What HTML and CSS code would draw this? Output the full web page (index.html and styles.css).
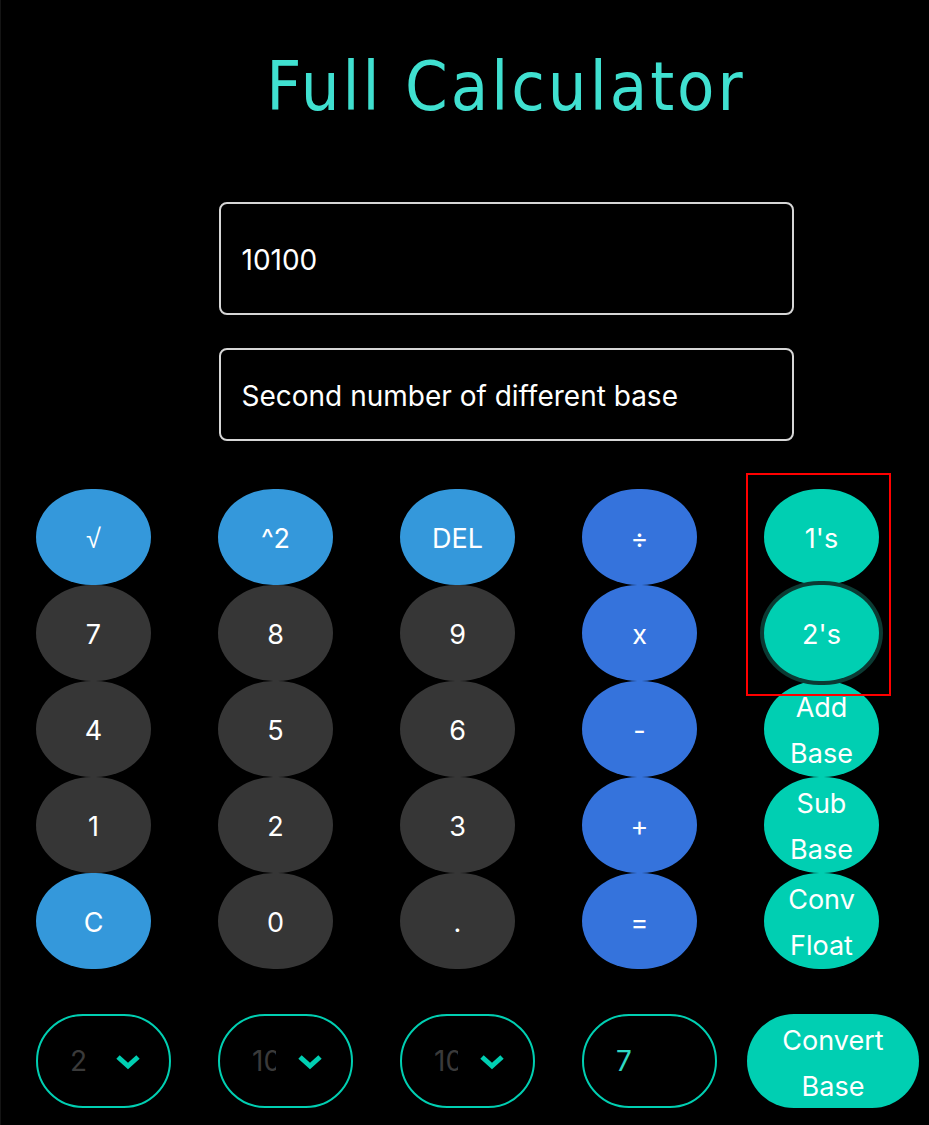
FILE: index.html
```html
<!DOCTYPE html>
<html lang="en">
<head>
<meta charset="utf-8">
<title>Full Calculator</title>
<link rel="stylesheet" href="styles.css">
</head>
<body>
<div class="page">
  <header class="top">
    <h1 class="title">Full Calculator</h1>
    <div class="field field-main">10100</div>
    <div class="field field-second">Second number of different base</div>
  </header>

  <div class="keypad">
    <button class="key key-fn key-sqrt">√</button>
    <button class="key key-fn">^2</button>
    <button class="key key-fn">DEL</button>
    <button class="key key-op">÷</button>
    <button class="key key-base">1's</button>

    <button class="key key-num">7</button>
    <button class="key key-num">8</button>
    <button class="key key-num">9</button>
    <button class="key key-op">x</button>
    <button class="key key-base key-focus">2's</button>

    <button class="key key-num">4</button>
    <button class="key key-num">5</button>
    <button class="key key-num">6</button>
    <button class="key key-op">-</button>
    <button class="key key-base key-two">Add<br>Base</button>

    <button class="key key-num">1</button>
    <button class="key key-num">2</button>
    <button class="key key-num">3</button>
    <button class="key key-op">+</button>
    <button class="key key-base key-two">Sub<br>Base</button>

    <button class="key key-fn">C</button>
    <button class="key key-num">0</button>
    <button class="key key-num">.</button>
    <button class="key key-op">=</button>
    <button class="key key-base key-two">Conv<br>Float</button>

    <div class="annot"></div>
  </div>

  <div class="converter">
    <div class="pill select">
      <span class="select-value">2</span>
      <svg class="chev" width="26" height="16" viewBox="0 0 26 16"><polyline points="3,3 13,12 23,3" fill="none" stroke="#00cfb2" stroke-width="5" stroke-linejoin="miter"/></svg>
    </div>
    <div class="pill select">
      <span class="select-value">10</span>
      <svg class="chev" width="26" height="16" viewBox="0 0 26 16"><polyline points="3,3 13,12 23,3" fill="none" stroke="#00cfb2" stroke-width="5" stroke-linejoin="miter"/></svg>
    </div>
    <div class="pill select">
      <span class="select-value">10</span>
      <svg class="chev" width="26" height="16" viewBox="0 0 26 16"><polyline points="3,3 13,12 23,3" fill="none" stroke="#00cfb2" stroke-width="5" stroke-linejoin="miter"/></svg>
    </div>
    <div class="pill digits">7</div>
    <button class="convert">Convert<br>Base</button>
  </div>
</div>
</body>
</html>
```

FILE: styles.css
```css
html, body {
  margin: 0;
  padding: 0;
  background: #000;
}

body {
  font-family: "Inter", "Noto Sans", sans-serif;
  color: #fff;
}

.page {
  width: 929px;
  height: 1125px;
  border-left: 1px solid #141414;
  box-sizing: border-box;
  padding-top: 44px;
  overflow: hidden;
}

.top {
  padding-left: 82px;
  display: flex;
  flex-direction: column;
  align-items: center;
}

.title {
  margin: 0;
  font-family: "DejaVu Sans Condensed", "DejaVu Sans", sans-serif;
  font-stretch: condensed;
  font-weight: 400;
  font-size: 68px;
  line-height: 80px;
  color: #40e0d0;
  letter-spacing: 3px;
  padding-top: 3px;
}

.field {
  width: 575px;
  box-sizing: border-box;
  border: 2px solid #d6d6d6;
  border-radius: 8px;
  padding-left: 21px;
  display: flex;
  align-items: center;
  font-size: 28px;
  color: #fff;
}

.field-main {
  margin-top: 75px;
  height: 113px;
  padding-top: 2px;
}

.field-second {
  margin-top: 33px;
  height: 93px;
  padding-top: 2px;
}

.keypad {
  position: relative;
  margin-top: 48px;
  margin-left: 35px;
  display: grid;
  grid-template-columns: repeat(5, 115px);
  grid-auto-rows: 96px;
  column-gap: 67px;
}

.key {
  border: none;
  margin: 0;
  padding: 3px 0 0 0;
  width: 115px;
  height: 96px;
  border-radius: 48% / 50%;
  font-family: "Inter", "Noto Sans", sans-serif;
  font-size: 27px;
  line-height: 46px;
  color: #fff;
}

.key-sqrt {
  font-family: "DejaVu Sans", sans-serif;
  font-weight: 300;
  padding-top: 4px;
}

.key-fn { background: #3498db; }
.key-num { background: #363636; }
.key-op { background: #3573dc; }
.key-base { background: #00cfb2; }

.key-focus {
  position: relative;
  box-shadow: 0 0 0 4px #0b3a33;
}

.annot {
  position: absolute;
  left: 710px;
  top: -16px;
  width: 145px;
  height: 223px;
  box-sizing: border-box;
  border: 2px solid #ff0000;
  pointer-events: none;
}

.converter {
  margin-top: 45px;
  margin-left: 35px;
  display: flex;
  gap: 47px;
}

.pill {
  width: 135px;
  height: 94px;
  box-sizing: border-box;
  border: 2px solid #00cfb2;
  border-radius: 47px;
  display: flex;
  align-items: center;
}

.select {
  padding-left: 32px;
}

.select-value {
  display: inline-block;
  width: 24px;
  overflow: hidden;
  white-space: nowrap;
  font-size: 28px;
  color: #3a3a3a;
}

.chev {
  margin-left: 21px;
  margin-top: 2px;
}

.digits {
  padding-left: 32px;
  font-size: 28px;
  color: #2fd8c4;
}

.convert {
  margin-left: -17px;
  width: 172px;
  height: 94px;
  border: none;
  border-radius: 47px;
  background: #00cfb2;
  color: #fff;
  font-family: "Inter", "Noto Sans", sans-serif;
  font-size: 27px;
  line-height: 46px;
  padding: 4px 0 0 0;
}
```
